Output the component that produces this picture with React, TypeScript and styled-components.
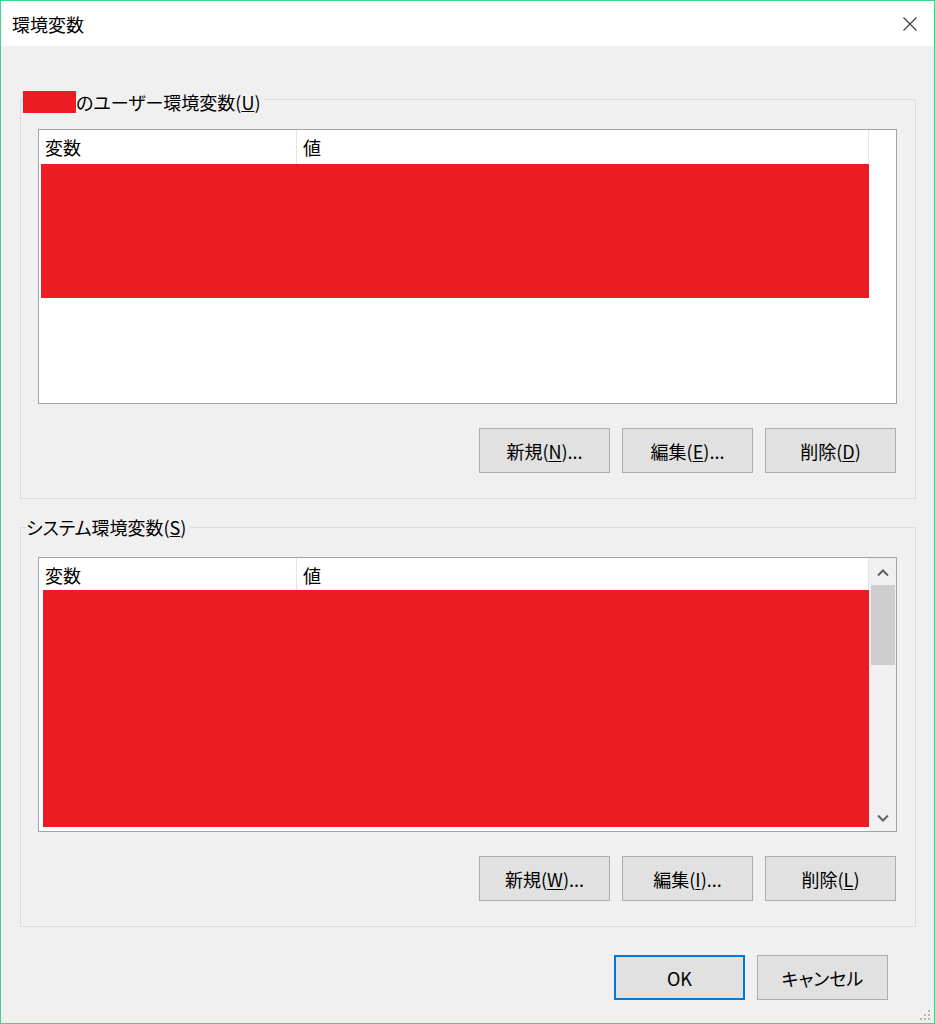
import React from "react";
import styled, { createGlobalStyle } from "styled-components";

const GlobalStyle = createGlobalStyle`
  html, body { margin: 0; padding: 0; background: #ffffff; }
  body { font-family: "Noto Sans CJK JP", "Noto Sans", sans-serif; }
  *, *::before, *::after { box-sizing: border-box; }
`;

const Window = styled.div`
  position: relative;
  width: 935px;
  height: 1024px;
  border: 1px solid #3ed38d;
  background: #f0f0f0;
  display: flex;
  flex-direction: column;
  font-size: 18px;
  color: #000;
  font-feature-settings: "palt";
`;

const TitleBar = styled.header`
  flex: none;
  height: 45px;
  background: #ffffff;
  display: flex;
  align-items: center;
  justify-content: space-between;
  padding: 0 17px 0 11px;
`;

const Title = styled.h1`
  margin: 0;
  font-size: 18px;
  font-weight: 400;
  line-height: 24px;
  color: #000;
`;

const CloseButton = styled.div`
  width: 14px;
  height: 14px;
  display: flex;
  margin-top: 1px;
`;

const Body = styled.main`
  flex: 1;
  display: flex;
  flex-direction: column;
  padding: 53px 18px 0 19px;
`;

const Group = styled.section`
  border: 1px solid #dcdcdc;
  display: flex;
  flex-direction: column;
  padding: 0 18px 25px 17px;
  & + & {
    margin-top: 28px;
  }
`;

const Legend = styled.h2<{ $lift: number; $indent: number }>`
  align-self: flex-start;
  margin: ${(p) => -p.$lift}px 0 ${(p) => p.$lift - 12}px ${(p) => p.$indent}px;
  height: 24px;
  display: flex;
  align-items: center;
  padding-right: 4px;
  background: #f0f0f0;
  font-size: 18px;
  font-weight: 400;
  line-height: 24px;
  white-space: nowrap;
`;

const NameMask = styled.span`
  display: block;
  width: 53px;
  height: 22px;
  background: #ed1c24;
`;

const List = styled.div`
  flex: none;
  height: 275px;
  margin-top: 17px;
  border: 1px solid #a0a4aa;
  background: #ffffff;
  display: flex;
  overflow: hidden;
`;

const ListMain = styled.div`
  flex: none;
  width: 830px;
  display: flex;
  flex-direction: column;
`;

const Header = styled.div`
  flex: none;
  display: flex;
  height: 34px;
`;

const HeaderCell = styled.div<{ $w: number }>`
  flex: none;
  width: ${(p) => p.$w}px;
  border-right: 1px solid #e5e5e5;
  padding: 1px 0 0 6px;
  line-height: 33px;
  font-size: 18px;
`;

const Redaction = styled.div<{ $left: number; $top: number; $height: number }>`
  flex: none;
  margin: ${(p) => p.$top}px 0 0 ${(p) => p.$left}px;
  height: ${(p) => p.$height}px;
  background: #ed1c24;
`;

const Scrollbar = styled.div`
  flex: 1;
  background: #f0f0f0;
  display: flex;
  flex-direction: column;
  align-items: center;
`;

const ScrollArrow = styled.div<{ $down?: boolean }>`
  flex: none;
  width: 100%;
  height: 27px;
  display: flex;
  align-items: center;
  justify-content: center;
  padding-top: ${(p) => (p.$down ? "0" : "3px")};
`;

const Thumb = styled.div`
  flex: none;
  width: 24px;
  height: 80px;
  background: #cdcdcd;
`;

const Track = styled.div`
  flex: 1;
`;

const ButtonRow = styled.div`
  display: flex;
  justify-content: flex-end;
  gap: 12px;
  margin: 24px 1px 0 0;
`;

const Footer = styled.div`
  display: flex;
  justify-content: flex-end;
  gap: 12px;
  margin-top: 28px;
  padding-right: 28px;
`;

const Button = styled.button<{ $default?: boolean }>`
  width: 131px;
  height: 45px;
  padding: 0;
  background: #e1e1e1;
  border: ${(p) => (p.$default ? "2px solid #0078d7" : "1px solid #adadad")};
  font-family: inherit;
  font-size: 18px;
  font-feature-settings: "palt";
  line-height: 24px;
  color: #000;
  cursor: default;
  u {
    text-underline-offset: 2px;
  }
`;

const Grip = styled.svg`
  position: absolute;
  right: 4px;
  bottom: 3px;
`;

const Chevron = ({ down }: { down?: boolean }) => (
  <svg width="12" height="8" viewBox="0 0 12 8">
    <polyline
      points={down ? "1,1.5 6,6.5 11,1.5" : "1,6.5 6,1.5 11,6.5"}
      fill="none"
      stroke="#606060"
      strokeWidth="2"
    />
  </svg>
);

type VarListProps = {
  maskLeft: number;
  maskTop: number;
  maskHeight: number;
  scroll?: boolean;
};

const VarList = ({ maskLeft, maskTop, maskHeight, scroll }: VarListProps) => (
  <List>
    <ListMain>
      <Header>
        <HeaderCell $w={258}>変数</HeaderCell>
        <HeaderCell $w={572}>値</HeaderCell>
      </Header>
      <Redaction $left={maskLeft} $top={maskTop} $height={maskHeight} />
    </ListMain>
    {scroll && (
      <Scrollbar>
        <ScrollArrow>
          <Chevron />
        </ScrollArrow>
        <Thumb />
        <Track />
        <ScrollArrow $down>
          <Chevron down />
        </ScrollArrow>
      </Scrollbar>
    )}
  </List>
);

export default function App() {
  return (
    <>
      <GlobalStyle />
      <Window>
        <TitleBar>
          <Title>環境変数</Title>
          <CloseButton>
            <svg width="14" height="14" viewBox="0 0 14 14">
              <path d="M0.5 0.5 L13.5 13.5 M13.5 0.5 L0.5 13.5" stroke="#3a3a3a" strokeWidth="1.1" fill="none" />
            </svg>
          </CloseButton>
        </TitleBar>
        <Body>
          <Group>
            <Legend $lift={10} $indent={-15}>
              <NameMask />
              のユーザー環境変数(<u>U</u>)
            </Legend>
            <VarList maskLeft={2} maskTop={0} maskHeight={134} />
            <ButtonRow>
              <Button>
                新規(<u>N</u>)...
              </Button>
              <Button>
                編集(<u>E</u>)...
              </Button>
              <Button>
                削除(<u>D</u>)
              </Button>
            </ButtonRow>
          </Group>
          <Group>
            <Legend $lift={13} $indent={-12}>
              システム環境変数(<u>S</u>)
            </Legend>
            <VarList maskLeft={4} maskTop={-2} maskHeight={237} scroll />
            <ButtonRow>
              <Button>
                新規(<u>W</u>)...
              </Button>
              <Button>
                編集(<u>I</u>)...
              </Button>
              <Button>
                削除(<u>L</u>)
              </Button>
            </ButtonRow>
          </Group>
          <Footer>
            <Button $default>OK</Button>
            <Button>キャンセル</Button>
          </Footer>
        </Body>
        <Grip width="10" height="10" viewBox="0 0 10 10">
          <g fill="#b8b8b8">
            <rect x="8" y="0" width="2" height="2" />
            <rect x="4" y="4" width="2" height="2" />
            <rect x="8" y="4" width="2" height="2" />
            <rect x="0" y="8" width="2" height="2" />
            <rect x="4" y="8" width="2" height="2" />
            <rect x="8" y="8" width="2" height="2" />
          </g>
        </Grip>
      </Window>
    </>
  );
}
